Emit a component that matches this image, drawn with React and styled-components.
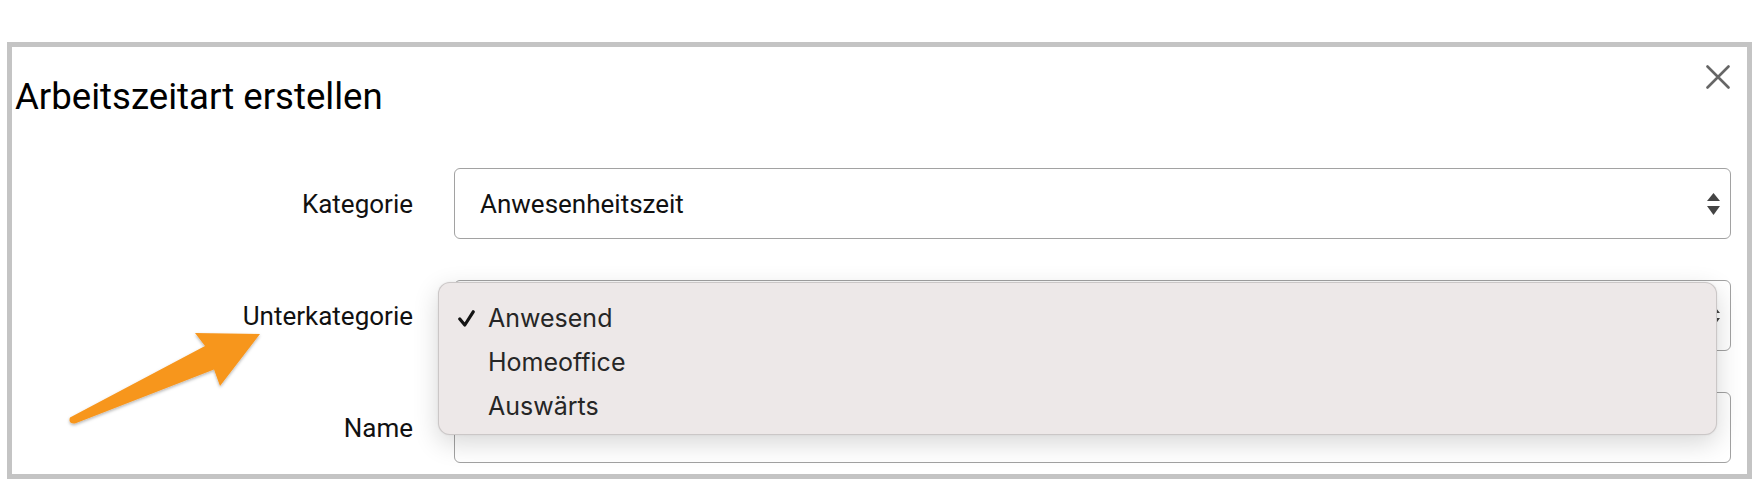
import React from 'react'
import styled, { createGlobalStyle } from 'styled-components'

const GlobalStyle = createGlobalStyle`
  html, body {
    margin: 0;
    padding: 0;
    background: #fff;
  }
  body {
    font-family: Roboto, "Liberation Sans", Arial, sans-serif;
    color: #111;
  }
`

const Page = styled.div`
  position: relative;
  width: 1756px;
  height: 480px;
  padding: 42px 0 0 7px;
  box-sizing: border-box;
`

const Frame = styled.div`
  width: 1745px;
  height: 437px;
  box-sizing: border-box;
  border: 5px solid #c4c4c4;
  background: #fff;
`

const Header = styled.div`
  display: flex;
  justify-content: space-between;
  align-items: flex-start;
  height: 121px;
  box-sizing: border-box;
  padding: 18px 17px 0 3px;
`

const Title = styled.h1`
  margin: 14px 0 0;
  font-size: 36.6px;
  line-height: 1;
  font-weight: 400;
  color: #000;
`

const CloseButton = styled.button`
  width: 24px;
  height: 24px;
  padding: 0;
  border: 0;
  background: none;
  cursor: pointer;
  display: block;
`

const Form = styled.div`
  display: grid;
  grid-template-columns: 401px 1fr;
  grid-auto-rows: 71px;
  column-gap: 41px;
  row-gap: 41px;
  padding-right: 16px;
`

const Label = styled.label`
  align-self: center;
  text-align: right;
  font-size: 26px;
  line-height: 1;
  color: #111;
`

const Field = styled.div`
  position: relative;
`

const Control = styled.div`
  height: 100%;
  box-sizing: border-box;
  display: flex;
  align-items: center;
  justify-content: space-between;
  padding: 0 10px 0 25px;
  border: 1.5px solid #a2a2a2;
  border-radius: 6px;
  background: #fff;
  font-size: 26px;
  color: #111;
`

const Popup = styled.div`
  position: absolute;
  left: -16px;
  top: 2px;
  width: 1279px;
  height: 153px;
  box-sizing: border-box;
  padding-top: 13px;
  background: #ede8e8;
  border: 1px solid rgba(0, 0, 0, 0.14);
  border-radius: 12px;
  box-shadow: 0 8px 26px rgba(0, 0, 0, 0.16), 0 0 2px rgba(0, 0, 0, 0.08);
  z-index: 2;
`

const Option = styled.div`
  display: grid;
  grid-template-columns: 30px 1fr;
  align-items: center;
  height: 44px;
  padding-left: 19px;
  font-family: Inter, "Noto Sans", sans-serif;
  font-size: 25px;
  line-height: 44px;
  color: #262626;
`

const ArrowLayer = styled.svg`
  position: absolute;
  left: 0;
  top: 0;
  pointer-events: none;
  z-index: 3;
  overflow: visible;
`

const SelectArrows = () => (
  <svg width="13" height="22" viewBox="0 0 13 22">
    <polygon points="0,8 6.5,0 13,8" fill="#444" />
    <polygon points="0,13 13,13 6.5,22" fill="#444" />
  </svg>
)

const Check = () => (
  <svg width="17" height="17" viewBox="0 0 17 17" style={{ display: 'block' }}>
    <path d="M1.8 9 L6.8 15 L15.2 1.8" fill="none" stroke="#141414" strokeWidth="3.2" strokeLinecap="round" strokeLinejoin="round" />
  </svg>
)

const options = ['Anwesend', 'Homeoffice', 'Auswärts']

export default function App() {
  return (
    <Page>
      <GlobalStyle />
      <Frame>
        <Header>
          <Title>Arbeitszeitart erstellen</Title>
          <CloseButton aria-label="Schließen">
            <svg width="24" height="24" viewBox="0 0 24 24">
              <path d="M1.5 1.5 L22.5 22.5 M22.5 1.5 L1.5 22.5" stroke="#666" strokeWidth="2.6" strokeLinecap="round" />
            </svg>
          </CloseButton>
        </Header>
        <Form>
          <Label>Kategorie</Label>
          <Control>
            <span>Anwesenheitszeit</span>
            <SelectArrows />
          </Control>

          <Label>Unterkategorie</Label>
          <Field>
            <Control>
              <span />
              <SelectArrows />
            </Control>
            <Popup>
              {options.map((o, i) => (
                <Option key={o}>
                  <span>{i === 0 && <Check />}</span>
                  <span>{o}</span>
                </Option>
              ))}
            </Popup>
          </Field>

          <Label>Name</Label>
          <Control />
        </Form>
      </Frame>
      <ArrowLayer width="1756" height="480">
        <defs>
          <filter id="arrowShadow" x="-20%" y="-20%" width="140%" height="140%">
            <feDropShadow dx="0" dy="1.5" stdDeviation="1.5" floodColor="#000" floodOpacity="0.3" />
          </filter>
        </defs>
        <path
          d="M70 417.5 L205 346 L195 333 L260 334 L220 386 L214 369.5 L75 423.5 Q70 424 69.5 420.5 Q69.5 418 70 417.5 Z"
          fill="#f7961f"
          filter="url(#arrowShadow)"
        />
      </ArrowLayer>
    </Page>
  )
}
